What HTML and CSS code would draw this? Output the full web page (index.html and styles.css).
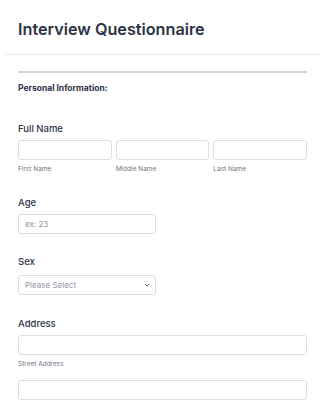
FILE: index.html
```html
<!DOCTYPE html>
<html>
<head>
<meta charset="utf-8">
<link rel="stylesheet" href="styles.css">
</head>
<body>
<div class="header">
  <h1 class="title">Interview Questionnaire</h1>
</div>
<div class="form">
  <div class="divider"></div>
  <div class="section">Personal Information:</div>

  <div class="field field-name">
    <div class="label">Full Name</div>
    <div class="row3">
      <div class="col"><div class="input"></div><div class="sub">First Name</div></div>
      <div class="col"><div class="input"></div><div class="sub">Middle Name</div></div>
      <div class="col"><div class="input"></div><div class="sub">Last Name</div></div>
    </div>
  </div>

  <div class="field field-age">
    <div class="label">Age</div>
    <div class="input short"><span class="ph">ex: 23</span></div>
  </div>

  <div class="field field-sex">
    <div class="label">Sex</div>
    <div class="input short select"><span class="ph">Please Select</span>
      <svg class="chev" width="6" height="4" viewBox="0 0 6 4"><path d="M1 1l2 2 2-2" fill="none" stroke="#4a5163" stroke-width="0.9"/></svg>
    </div>
  </div>

  <div class="field field-addr">
    <div class="label">Address</div>
    <div class="input"></div>
    <div class="sub">Street Address</div>
    <div class="input addr2"></div>
  </div>
</div>
</body>
</html>
```
FILE: styles.css
```css
* { box-sizing: border-box; }
body {
  margin: 0;
  background: #fff;
  font-family: Inter, "Noto Sans", sans-serif;
  color: #2c3345;
  overflow: hidden;
}
.header {
  margin: 0 4px;
  padding: 19px 14px 15px;
  border-bottom: 1px solid #eaebef;
}
.title {
  margin: 0;
  font-size: 16.2px;
  line-height: 20px;
  font-weight: 600;
  color: #2c3345;
}
.form {
  padding: 0 18px;
}
.divider {
  margin-top: 16px;
  height: 2px;
  background: #cfd3dc;
}
.section {
  margin-top: 10px;
  font-size: 8.5px;
  line-height: 11px;
  font-weight: 700;
  color: #2c3345;
}
.label {
  font-size: 9.5px;
  line-height: 12px;
  font-weight: 500;
  color: #2c3345;
}
.field-name { margin-top: 29px; }
.field-age { margin-top: 23px; }
.field-sex { margin-top: 22px; }
.field-addr { margin-top: 23px; }
.row3 {
  margin-top: 5px;
  display: grid;
  grid-template-columns: 1fr 1fr 1fr;
  gap: 4px;
}
.input {
  height: 20px;
  border: 1px solid #dadde5;
  border-radius: 3px;
  background: #fff;
  display: flex;
  align-items: center;
  padding: 0 6px;
}
.field-age .input { margin-top: 5px; }
.field-sex .input { margin-top: 7px; }
.field-addr .input { margin-top: 5px; }
.field-addr .addr2 { margin-top: 11px; }
.short { width: 138px; }
.select { justify-content: space-between; padding-right: 5px; }
.ph {
  font-size: 8px;
  color: #8f96a3;
}
.sub {
  margin-top: 5px;
  font-size: 6.5px;
  line-height: 9px;
  color: #6f7585;
}
```
